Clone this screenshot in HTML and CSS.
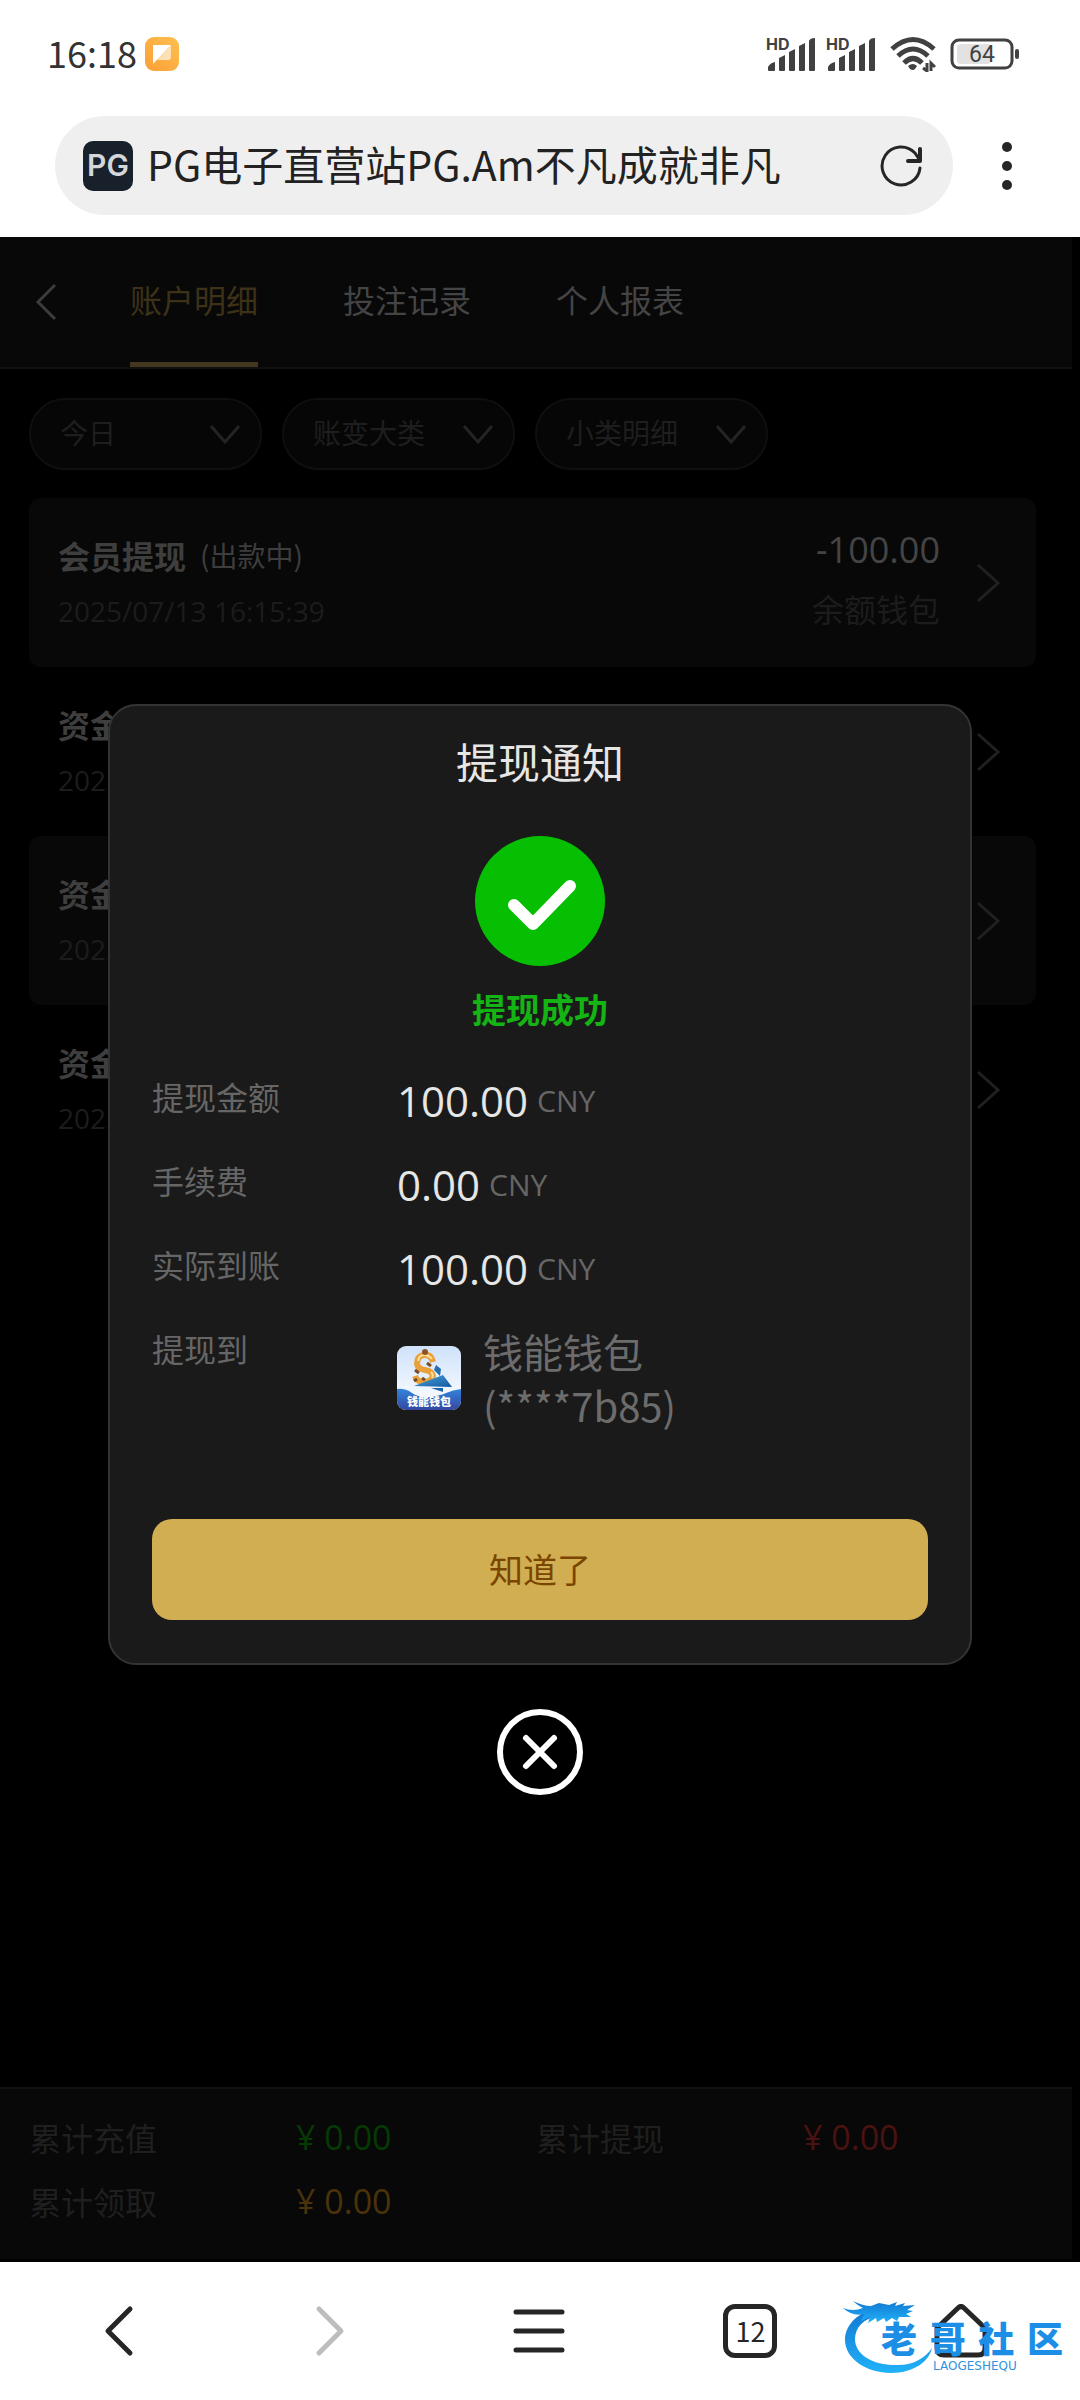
FILE: index.html
```html
<!DOCTYPE html>
<html lang="zh-CN">
<head>
<meta charset="utf-8">
<meta name="viewport" content="width=device-width, initial-scale=1">
<title>PG电子直营站</title>
<link rel="stylesheet" href="styles.css">
</head>
<body>
<header class="browser-top">
  <div class="status-bar">
    <div class="status-left">
      <span class="clock">16:18</span>
      <svg class="note-icon" viewBox="0 0 34 34" width="34" height="34" aria-hidden="true">
        <defs><linearGradient id="note" x1="0" y1="1" x2="1" y2="0"><stop offset="0" stop-color="#fb9f37"/><stop offset="1" stop-color="#fdc04f"/></linearGradient></defs>
        <rect width="34" height="34" rx="9" fill="url(#note)"/>
        <path d="M8 8h18L8 27z" fill="#fff"/>
        <path d="M26 8v12q0 3-3 3H12z" fill="#fde0b4"/>
      </svg>
    </div>
    <div class="status-right">
      <svg viewBox="-2 -6 52 46" width="52" height="46" aria-hidden="true">
        <g class="ink"><text class="hd" x="0" y="13">HD</text>
        <path d="M2 33v-3q2-4 7-5v8q0 1-1 1H3q-1 0-1-1zM13 33V21l6-3v15q0 1-1 1h-4q-1 0-1-1zM23 33V15l6-3v21q0 1-1 1h-4q-1 0-1-1zM33 33V9l6-3v27q0 1-1 1h-4q-1 0-1-1zM43 33V4q1-3 6-3v32q0 1-1 1h-4q-1 0-1-1z"/></g>
      </svg>
      <svg viewBox="-2 -6 52 46" width="52" height="46" aria-hidden="true">
        <g class="ink"><text class="hd" x="0" y="13">HD</text>
        <path d="M2 33v-3q2-4 7-5v8q0 1-1 1H3q-1 0-1-1zM13 33V21l6-3v15q0 1-1 1h-4q-1 0-1-1zM23 33V15l6-3v21q0 1-1 1h-4q-1 0-1-1zM33 33V9l6-3v27q0 1-1 1h-4q-1 0-1-1zM43 33V4q1-3 6-3v32q0 1-1 1h-4q-1 0-1-1z"/></g>
      </svg>
      <svg class="wifi" viewBox="0 0 46 36" width="46" height="36" aria-hidden="true">
        <g fill="none" stroke="#414141" stroke-width="5"><path d="M2 13Q23-6 44 13"/><path d="M8 20Q23 6 38 20"/><path d="M14 27Q23 18 32 27"/></g>
        <path class="ink" d="M18 30q5-4 9 0l-2 3q-2 2-5 0z"/>
        <path d="M37 27v8l-4-3M41 35v-8l4 4" fill="none" stroke="#414141" stroke-width="3"/>
      </svg>
      <svg class="battery" viewBox="0 0 70 32" width="70" height="32" aria-hidden="true">
        <rect x="7" y="6" width="34" height="20" rx="4" fill="#e2e2e2"/>
        <rect x="2" y="2" width="60" height="28" rx="7" fill="none" stroke="#414141" stroke-width="3"/>
        <rect class="ink" x="65" y="11" width="4" height="10" rx="2"/>
        <text class="ink battery-text" x="32" y="24" text-anchor="middle">64</text>
      </svg>
    </div>
  </div>
  <div class="address-row">
    <div class="address-pill">
      <svg viewBox="0 0 50 50" width="50" height="50" aria-hidden="true">
        <rect width="50" height="50" rx="10" fill="#17202b"/>
        <text class="fav-text" x="25" y="35" text-anchor="middle">PG</text>
      </svg>
      <input class="address" type="text" aria-label="网址" value="PG电子直营站PG.Am不凡成就非凡">
      <button class="icon-button" type="button" aria-label="刷新">
        <svg viewBox="0 0 44 44" width="44" height="44" fill="none" stroke="#262626" stroke-width="3" stroke-linecap="round" stroke-linejoin="round" aria-hidden="true"><path d="M41 24A19 19 0 1 1 36 9l4 6"/><path d="M41 5v12H29" stroke-width="4"/></svg>
      </button>
    </div>
    <button class="icon-button more" type="button" aria-label="更多">
      <svg viewBox="0 0 12 50" width="12" height="50" fill="#262626" aria-hidden="true"><circle cx="6" cy="6" r="5"/><circle cx="6" cy="25" r="5"/><circle cx="6" cy="44" r="5"/></svg>
    </button>
  </div>
</header>

<main class="app">
  <div class="page">
    <div class="tab-bar">
      <button class="icon-button back" type="button" aria-label="返回">
        <svg viewBox="0 0 24 38" width="24" height="38" fill="none" stroke="#3c3c3c" stroke-width="3" aria-hidden="true"><path d="M21 2L4 19l17 17"/></svg>
      </button>
      <nav class="tabs">
        <a class="tab active" href="#detail">账户明细</a>
        <a class="tab" href="#bets">投注记录</a>
        <a class="tab" href="#report">个人报表</a>
      </nav>
    </div>

    <div class="filters">
      <label class="filter">
        <select aria-label="日期"><option>今日</option></select>
        <svg viewBox="0 0 30 20" width="30" height="20" aria-hidden="true"><path d="M1 1l14 16L29 1"/></svg>
      </label>
      <label class="filter">
        <select aria-label="大类"><option>账变大类</option></select>
        <svg viewBox="0 0 30 20" width="30" height="20" aria-hidden="true"><path d="M1 1l14 16L29 1"/></svg>
      </label>
      <label class="filter">
        <select aria-label="小类"><option>小类明细</option></select>
        <svg viewBox="0 0 30 20" width="30" height="20" aria-hidden="true"><path d="M1 1l14 16L29 1"/></svg>
      </label>
    </div>

    <ul class="records">
      <li class="record">
        <div class="record-main">
          <div class="record-title"><strong>会员提现</strong><span class="record-state">(出款中)</span></div>
          <div class="record-date">2025/07/13 16:15:39</div>
        </div>
        <div class="record-side">
          <div class="record-amount">-100.00</div>
          <div class="record-wallet">余额钱包</div>
        </div>
        <svg class="arrow" viewBox="0 0 24 40" width="24" height="40" aria-hidden="true"><path d="M2 2l20 18L2 38"/></svg>
      </li>
      <li class="record">
        <div class="record-main">
          <div class="record-title"><strong>资金</strong></div>
          <div class="record-date">2025</div>
        </div>
        <svg class="arrow" viewBox="0 0 24 40" width="24" height="40" aria-hidden="true"><path d="M2 2l20 18L2 38"/></svg>
      </li>
      <li class="record">
        <div class="record-main">
          <div class="record-title"><strong>资金</strong></div>
          <div class="record-date">2025</div>
        </div>
        <svg class="arrow" viewBox="0 0 24 40" width="24" height="40" aria-hidden="true"><path d="M2 2l20 18L2 38"/></svg>
      </li>
      <li class="record">
        <div class="record-main">
          <div class="record-title"><strong>资金</strong></div>
          <div class="record-date">2025</div>
        </div>
        <svg class="arrow" viewBox="0 0 24 40" width="24" height="40" aria-hidden="true"><path d="M2 2l20 18L2 38"/></svg>
      </li>
    </ul>

    <dl class="summary">
      <div class="total"><dt>累计充值</dt><dd class="green">¥ 0.00</dd></div>
      <div class="total"><dt>累计提现</dt><dd class="red">¥ 0.00</dd></div>
      <div class="total"><dt>累计领取</dt><dd class="gold">¥ 0.00</dd></div>
    </dl>
  </div>

  <div class="overlay">
    <section class="modal" role="dialog" aria-labelledby="modal-title">
      <h1 class="modal-title" id="modal-title">提现通知</h1>
      <svg class="check" viewBox="0 0 130 130" width="130" height="130" aria-hidden="true">
        <circle cx="65" cy="65" r="65" fill="#06bf02"/>
        <path d="M39 69l19 19 37-38" fill="none" stroke="#fff" stroke-width="12" stroke-linecap="round" stroke-linejoin="round"/>
      </svg>
      <p class="result">提现成功</p>
      <dl class="details">
        <div class="detail"><dt>提现金额</dt><dd>100.00<span class="unit">CNY</span></dd></div>
        <div class="detail"><dt>手续费</dt><dd>0.00<span class="unit">CNY</span></dd></div>
        <div class="detail"><dt>实际到账</dt><dd>100.00<span class="unit">CNY</span></dd></div>
        <div class="detail"><dt>提现到</dt>
          <dd class="wallet">
            <svg viewBox="0 0 64 64" width="64" height="64" aria-hidden="true">
              <defs>
                <clipPath id="wclip"><rect width="64" height="64" rx="9"/></clipPath>
                <linearGradient id="wsky" x1="0" y1="0" x2="0" y2="1"><stop offset="0" stop-color="#cfe2fb"/><stop offset="1" stop-color="#fff"/></linearGradient>
                <linearGradient id="wsea" x1="0" y1="0" x2="0" y2="1"><stop offset="0" stop-color="#3384dc"/><stop offset="1" stop-color="#35479f"/></linearGradient>
                <linearGradient id="wboat" x1="0" y1="0" x2="1" y2="1"><stop offset="0" stop-color="#4aa5dc"/><stop offset="1" stop-color="#1358a0"/></linearGradient>
              </defs>
              <g clip-path="url(#wclip)">
                <rect width="64" height="64" fill="url(#wsky)"/>
                <path d="M39 19l5 4-1 7-6-6z" fill="#246fae"/>
                <path d="M36 16Q34 8 27 9t-7 9q1 5 8 6t8 6q-2 6-9 6t-9-6" fill="none" stroke="#e9a03a" stroke-width="6"/>
                <path d="M35 13Q32 9 27 9t-6 6M34 26q3 3 1 6" fill="none" stroke="#ffe09a" stroke-width="2"/>
                <circle cx="28" cy="6" r="3" fill="#8a5426"/><path d="M18 24l4 3M17 35l3-2M30 17l4 3M25 32l3 2" stroke="#7a4a26" stroke-width="3"/>
                <path d="M17 40l29-11 9 12z" fill="url(#wboat)"/>
                <path d="M34 42h12v4z" fill="#1d62ad"/>
                <path d="M0 43q8-1 15 4t17 4 17-4 15-4v21H0z" fill="url(#wsea)"/>
                <text class="wallet-logo" x="32" y="60" text-anchor="middle">钱能钱包</text>
              </g>
            </svg>
            <div>钱能钱包<br>(****7b85)</div>
          </dd>
        </div>
      </dl>
      <button class="confirm" type="button">知道了</button>
    </section>
    <button class="icon-button close" type="button" aria-label="关闭">
      <svg viewBox="0 0 88 88" width="88" height="88" fill="none" stroke="#fff" stroke-width="6" stroke-linecap="round" aria-hidden="true"><circle cx="44" cy="44" r="40"/><path d="M30 30l28 28M58 30L30 58"/></svg>
    </button>
  </div>
</main>

<footer class="browser-bottom">
  <button class="icon-button" type="button" aria-label="后退">
    <svg viewBox="0 0 54 54" width="54" height="54" fill="none" stroke="#262626" stroke-width="5" stroke-linecap="round" stroke-linejoin="round" aria-hidden="true"><path d="M38 5L16 27l22 22"/></svg>
  </button>
  <button class="icon-button" type="button" aria-label="前进" disabled>
    <svg viewBox="0 0 54 54" width="54" height="54" fill="none" stroke="#bdbdbd" stroke-width="5" stroke-linecap="round" stroke-linejoin="round" aria-hidden="true"><path d="M16 5l22 22-22 22"/></svg>
  </button>
  <button class="icon-button" type="button" aria-label="菜单">
    <svg viewBox="0 0 54 54" width="54" height="54" fill="none" stroke="#262626" stroke-width="5" stroke-linecap="round" aria-hidden="true"><path d="M3 8h46M3 27h46M3 46h46"/></svg>
  </button>
  <button class="tab-count" type="button" aria-label="标签页 12">12</button>
  <button class="icon-button" type="button" aria-label="主页">
    <svg viewBox="0 0 54 54" width="54" height="54" fill="none" stroke="#262626" stroke-width="5" stroke-linejoin="round" aria-hidden="true"><path d="M3 24L24 4q3-3 6 0l21 20v20q0 7-7 7H10q-7 0-7-7z"/></svg>
  </button>
  <div class="watermark">
    <svg viewBox="0 0 92 78" width="92" height="78" aria-hidden="true">
      <defs><linearGradient id="wm" x1="0" y1="0" x2="0" y2="1"><stop offset="0" stop-color="#1377d2"/><stop offset="1" stop-color="#20b2f8"/></linearGradient></defs>
      <g fill="url(#wm)">
        <path d="M32 13C10 20 4 34 4 44C4 63 26 77 50 77C72 77 88 66 91 52C84 62 72 70 54 69C32 69 14 59 14 43C14 32 22 22 38 20Z"/>
        <path d="M2 12q10 4 20 0-6-3-10-7 10 5 18 5l8-3 10 2 8-3-2 4 10-3-2 3 12-1-8 5 6 1-7 3 5 3-12 0-2 4-5-3-6 4-2-4-7 4-1-4-8 5 2-6-9 4 3-7q-11 3-21-6z"/>
      </g>
    </svg>
    <div class="watermark-words">
      <div class="watermark-name"><span>老</span><span>哥</span><span>社</span><span>区</span></div>
      <div class="watermark-latin">LAOGESHEQU</div>
    </div>
  </div>
</footer>
</body>
</html>
```
FILE: styles.css
```css
* { box-sizing: border-box; }

body {
  margin: 0;
  min-height: 100vh;
  display: flex;
  flex-direction: column;
  background: #fff;
  font-family: "Noto Sans CJK SC", "Noto Sans", sans-serif;
  font-size: 32px;
  line-height: 48px;
}

button, input, select { font: inherit; color: inherit; border: 0; background: none; padding: 0; }
svg { display: block; flex: none; }
dl, dd, ul, p, h1 { margin: 0; padding: 0; }
.icon-button { display: flex; align-items: center; justify-content: center; }

/* browser top */
.status-bar {
  height: 108px;
  padding: 0 60px 0 47px;
  display: flex;
  align-items: center;
  justify-content: space-between;
}
.status-left { display: flex; align-items: center; gap: 8px; }
.status-right { display: flex; align-items: center; gap: 8px; }
.clock { font-size: 36px; line-height: 44px; padding-bottom: 4px; color: #333; }
.ink { fill: #414141; }
.hd { font: 700 16px Inter, sans-serif; }
.wifi { margin-left: 6px; }
.battery { margin-left: 6px; }
.battery-text { font: 400 23px Roboto, sans-serif; }

.address-row { display: flex; align-items: center; gap: 30px; padding: 8px 49px 22px 55px; }
.address-pill {
  flex: 1;
  min-width: 0;
  height: 99px;
  padding: 0 30px 0 28px;
  border-radius: 50px;
  background: #efefef;
  display: flex;
  align-items: center;
  gap: 14px;
}
.fav-text { font: 600 30px Inter, sans-serif; fill: #d4d6da; }
.address { flex: 1; min-width: 0; height: 66px; padding-bottom: 6px; font-size: 41px; color: #222; }
.more { width: 48px; height: 60px; }

/* dimmed page */
.app { flex: 1; position: relative; display: flex; background: #000; }
.page { flex: 1; margin-right: 8px; padding-bottom: 3px; display: flex; flex-direction: column; }

.tab-bar { height: 132px; background: #080808; border-bottom: 2px solid #101010; display: flex; }
.back { width: 130px; padding: 0 36px 0 34px; justify-content: flex-start; }
.tabs { display: flex; gap: 85px; }
.tab {
  padding-top: 38px;
  border-bottom: 5px solid transparent;
  color: #444;
  text-decoration: none;
}
.active { color: #3d3118; border-color: #443720; }

.filters { display: flex; gap: 20px; padding: 29px 29px 28px; }
.filter { position: relative; width: 233px; height: 72px; }
.filter select {
  width: 100%;
  height: 100%;
  padding: 0 60px 4px 29px;
  border: 2px solid #0f0f0f;
  border-radius: 36px;
  background: #060606;
  color: #1e1e1e;
  font-size: 28px;
  appearance: none;
}
.filter svg {
  position: absolute;
  right: 22px;
  top: 27px;
  fill: none;
  stroke: #242424;
  stroke-width: 3;
  pointer-events: none;
}

.records { list-style: none; padding: 0 36px 0 29px; flex: 1; }
.record {
  height: 169px;
  padding: 0 36px 0 29px;
  border-radius: 12px;
  display: flex;
  align-items: center;
  gap: 36px;
}
.record:nth-child(odd) { background: #080808; }
.record-main { flex: 1; }
.record-title { display: flex; gap: 14px; color: #3e3e3e; margin-bottom: 8px; }
.record-state { font-size: 28px; }
.record-date, .record-amount, .total dd, .detail dd { font-family: "Open Sans", "Noto Sans CJK SC", sans-serif; }
.record-date { font-size: 28px; color: #1c1c1c; }
.record-side { text-align: right; color: #1c1c1c; padding-bottom: 8px; }
.record-amount { font-size: 36px; color: #444; margin-bottom: 10px; }
.arrow { fill: none; stroke: #202020; stroke-width: 3; }

.summary {
  padding: 16px 29px 26px;
  border-top: 2px solid #101010;
  background: #080808;
  display: grid;
  grid-template-columns: 1fr 1fr;
  line-height: 64px;
  color: #1f1f1f;
}
.total { display: flex; }
.total dt { width: 267px; }
.total dd { font-size: 34px; }
.green { color: #053a05; }
.red { color: #4a1212; }
.gold { color: #4a320a; }

/* dialog */
.overlay {
  position: absolute;
  inset: 0;
  display: flex;
  flex-direction: column;
  align-items: center;
  justify-content: center;
  gap: 43px;
}
.modal {
  width: 80%;
  padding: 25px 42px 43px;
  border: 2px solid #333;
  border-radius: 28px;
  background: #1a1a1a;
  display: flex;
  flex-direction: column;
}
.modal-title { font-size: 42px; font-weight: 400; line-height: 60px; text-align: center; color: #e6e6e6; }
.check { align-self: center; margin: 45px 0 19px; }
.result { font-size: 34px; font-weight: 700; text-align: center; color: #14b414; }
.details { margin: 39px 0 87px; display: grid; gap: 26px; }
.detail { display: flex; color: #666; }
.detail dt { width: 245px; }
.detail dd { display: flex; align-items: center; gap: 9px; font-size: 42px; line-height: 58px; color: #e6e6e6; }
.unit { font-size: 30px; color: #666; }
.detail .wallet { gap: 22px; font-family: inherit; font-size: 40px; line-height: 54px; color: #6c6c6c; }
.wallet-logo { font-size: 11px; font-weight: 900; fill: #fff; }
.confirm { height: 101px; border-radius: 20px; background: #d0ae51; color: #7a4500; font-size: 34px; }

/* browser bottom */
.browser-bottom {
  position: relative;
  height: 138px;
  padding: 0 14px;
  display: grid;
  grid-template-columns: repeat(5, 1fr);
  align-items: center;
  justify-items: center;
}
.tab-count {
  width: 54px;
  height: 54px;
  border: 5px solid #262626;
  border-radius: 12px;
  font-size: 27px;
  line-height: 40px;
  color: #262626;
}
.watermark { position: absolute; right: 17px; bottom: 26px; width: 222px; height: 78px; }
.watermark-words { position: absolute; left: 40px; right: 0; top: 24px; }
.watermark-name {
  display: flex;
  justify-content: space-between;
  font-size: 36px;
  font-weight: 900;
  line-height: 34px;
  color: #1c8ee6;
}
.watermark-latin { padding: 6px 0 0 52px; font: 12px/12px "DejaVu Sans", sans-serif; color: #2f93e0; }
```
